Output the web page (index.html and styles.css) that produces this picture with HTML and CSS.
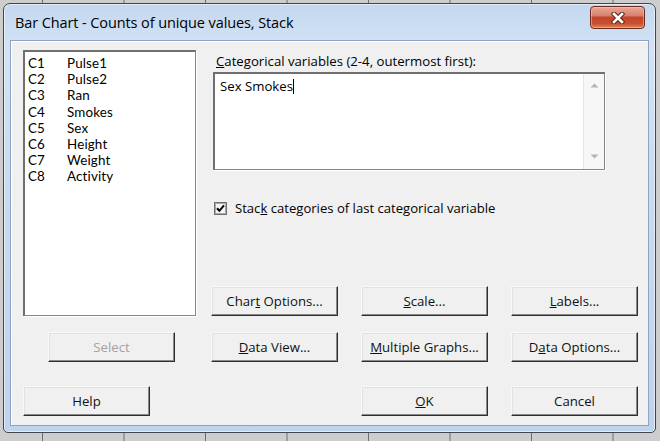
FILE: index.html
```html
<!DOCTYPE html>
<html>
<head>
<meta charset="utf-8">
<title>Bar Chart - Counts of unique values, Stack</title>
<link rel="stylesheet" href="styles.css">
</head>
<body>
<div class="desktop">
  <div class="window">
    <div class="titlebar">
      <span class="title">Bar Chart - Counts of unique values, Stack</span>
      <span class="close" aria-label="Close">
        <svg width="14" height="12" viewBox="0 0 14 12">
          <path d="M3 2 L11 10 M11 2 L3 10" stroke="#5a2a20" stroke-width="4.6" stroke-linecap="square" fill="none"/>
          <path d="M3 2 L11 10 M11 2 L3 10" stroke="#ffffff" stroke-width="2.6" stroke-linecap="square" fill="none"/>
        </svg>
      </span>
    </div>

    <div class="client">
      <div class="top">
        <div class="listbox">
          <div class="item"><span class="cnum">C1</span><span>Pulse1</span></div>
          <div class="item"><span class="cnum">C2</span><span>Pulse2</span></div>
          <div class="item"><span class="cnum">C3</span><span>Ran</span></div>
          <div class="item"><span class="cnum">C4</span><span>Smokes</span></div>
          <div class="item"><span class="cnum">C5</span><span>Sex</span></div>
          <div class="item"><span class="cnum">C6</span><span>Height</span></div>
          <div class="item"><span class="cnum">C7</span><span>Weight</span></div>
          <div class="item"><span class="cnum">C8</span><span>Activity</span></div>
        </div>

        <div class="panel">
          <div class="caption"><u>C</u>ategorical variables (2-4, outermost first):</div>
          <div class="edit">
            <div class="edit-text">Sex Smokes<span class="caret"></span></div>
            <div class="vscroll">
              <svg width="9" height="5" viewBox="0 0 9 5"><path d="M0.5 4.5 L4.5 0.5 L8.5 4.5 Z" fill="#b4b4b4"/></svg>
              <svg width="9" height="5" viewBox="0 0 9 5"><path d="M0.5 0.5 L4.5 4.5 L8.5 0.5 Z" fill="#b4b4b4"/></svg>
            </div>
          </div>
          <div class="check">
            <span class="box">
              <svg width="13" height="13" viewBox="0 0 13 13">
                <rect x="0.5" y="0.5" width="12" height="12" fill="#f4f4f4" stroke="#707070"/>
                <rect x="1.5" y="1.5" width="10" height="10" fill="none" stroke="#a8a8a8"/>
                <path d="M3 6.2 L5.4 8.8 L10 3.4" stroke="#000" stroke-width="2" fill="none"/>
              </svg>
            </span>
            <span>Stac<u>k</u> categories of last categorical variable</span>
          </div>
          <div class="btnrow">
            <span class="btn"><span>Char<u>t</u> Options...</span></span>
            <span class="btn"><span><u>S</u>cale...</span></span>
            <span class="btn"><span><u>L</u>abels...</span></span>
          </div>
        </div>
      </div>

      <div class="actions">
        <span class="btn disabled select"><span>Select</span></span>
        <span class="btn"><span><u>D</u>ata View...</span></span>
        <span class="btn"><span><u>M</u>ultiple Graphs...</span></span>
        <span class="btn"><span>D<u>a</u>ta Options...</span></span>
        <span class="btn help"><span>Help</span></span>
        <span class="btn ok"><span><u>O</u>K</span></span>
        <span class="btn"><span>Cancel</span></span>
      </div>
    </div>
  </div>
</div>
</body>
</html>
```

FILE: styles.css
```css
* { box-sizing: border-box; }

html, body {
  margin: 0;
  padding: 0;
}

body {
  font-family: "Open Sans", "DejaVu Sans", sans-serif;
  color: #000;
}

/* worksheet grid visible behind the dialog */
.desktop {
  width: 660px;
  height: 441px;
  padding: 3px 0 0 3px;
  background-color: #cdcdcd;
  background-image: linear-gradient(90deg, #6e6e6e 1px, transparent 1px);
  background-size: 81.5px 100%;
  background-position: 42px 0;
  overflow: hidden;
}

/* Aero-style window frame */
.window {
  width: 653px;
  height: 430px;
  border: 1px solid #3f4650;
  border-radius: 7px 7px 5px 5px;
  background: linear-gradient(180deg, #c3d7ee 0%, #d3e3f5 10%, #c9dbf0 40%, #bfd3ec 100%);
  box-shadow: inset 0 0 0 1px rgba(255, 255, 255, 0.55);
  display: flex;
  flex-direction: column;
}

.titlebar {
  height: 37px;
  display: flex;
  align-items: flex-start;
  padding-left: 11px;
  padding-right: 10px;
}

.title {
  align-self: center;
  font-size: 14.5px;
  letter-spacing: -0.1px;
  color: #000;
  margin-top: -1px;
}

.close {
  margin-left: auto;
  margin-top: 2px;
  width: 55px;
  height: 23px;
  border: 1px solid #6d2a1e;
  border-radius: 4px;
  background: linear-gradient(180deg, #e9a897 0%, #d98370 40%, #c4432b 50%, #c9522f 80%, #dc8a5a 100%);
  box-shadow: inset 0 0 0 1px rgba(255, 210, 200, 0.45);
  display: flex;
  align-items: center;
  justify-content: center;
}

/* dialog client area */
.client {
  margin: 0 7px 7px;
  width: 637px;
  height: 384px;
  background: #f0f0f0;
  outline: 1px solid #8ea4c0;
  border-top: 1px solid #ffffff;
  border-left: 1px solid #ffffff;
  padding: 8px 0 0 11px;
  font-size: 13.2px;
}

.top {
  display: flex;
  height: 266px;
}

.listbox {
  width: 173px;
  height: 266px;
  background: #fff;
  border-style: solid;
  border-width: 2px 1px 1px 2px;
  border-color: #6f6f6f #858585 #858585 #6f6f6f;
  box-shadow: 1px 1px 0 #ffffff;
  padding: 3px 0 0 3px;
}

.item {
  display: flex;
  height: 16.2px;
  line-height: 16.2px;
  font-family: "Lato", "Open Sans", sans-serif;
  font-size: 13.4px;
  letter-spacing: 0.15px;
}

.cnum {
  width: 39px;
}

.panel {
  margin-left: 15px;
  width: 427px;
  display: flex;
  flex-direction: column;
}

.caption {
  margin-top: 4px;
  margin-left: 5px;
  line-height: 14px;
  font-size: 13.2px;
}

.edit {
  margin-top: 4px;
  margin-left: 2px;
  width: 392px;
  height: 98px;
  background: #fff;
  border-style: solid;
  border-width: 2px 1px 1px 2px;
  border-color: #6f6f6f #858585 #858585 #6f6f6f;
  box-shadow: 1px 1px 0 #ffffff;
  display: flex;
}

.edit-text {
  flex: 1;
  padding: 5px 0 0 5px;
  line-height: 14px;
  font-size: 13.2px;
}

.caret {
  display: inline-block;
  width: 1px;
  height: 15px;
  background: #000;
  vertical-align: -3px;
}

.vscroll {
  width: 21px;
  background: #f7f7f7;
  border-left: 1px solid #e4e4e4;
  display: flex;
  flex-direction: column;
  align-items: center;
  justify-content: space-between;
  padding: 9px 0 10px;
}

.check {
  margin-top: 31px;
  margin-left: 3px;
  display: flex;
  align-items: center;
  gap: 8px;
  font-size: 13.1px;
  line-height: 14px;
}

.box {
  display: flex;
  width: 13px;
  height: 13px;
}

.btnrow {
  margin-top: auto;
  display: flex;
  gap: 23px;
}

/* classic raised push buttons */
.btn {
  width: 127px;
  height: 30px;
  background: #f0f0f0;
  border: 1px solid;
  border-color: #f8f8f8 #2e2e2e #2e2e2e #f8f8f8;
  box-shadow: inset -1px -1px 0 #8a8a8a, inset 1px 1px 0 #e2e2e2;
  display: flex;
  align-items: center;
  justify-content: center;
  font-size: 13.2px;
  color: #111;
}

.btn.disabled {
  color: #a3a3a3;
}

.actions {
  margin-top: 16px;
  display: grid;
  grid-template-columns: 165px 127px 127px 127px;
  column-gap: 23px;
  row-gap: 24px;
}

.select {
  margin-left: 25px;
}

.help {
  grid-column: 1;
}

.ok {
  grid-column: 3;
}
```
